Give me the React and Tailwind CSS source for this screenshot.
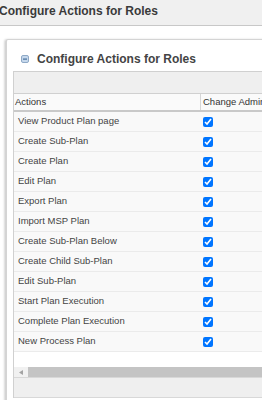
import React from "react";

const actions = [
  "View Product Plan page",
  "Create Sub-Plan",
  "Create Plan",
  "Edit Plan",
  "Export Plan",
  "Import MSP Plan",
  "Create Sub-Plan Below",
  "Create Child Sub-Plan",
  "Edit Sub-Plan",
  "Start Plan Execution",
  "Complete Plan Execution",
  "New Process Plan",
];

const MinusBox = () => (
  <svg width="8" height="8" viewBox="0 0 8 8" className="shrink-0">
    <rect x="0.5" y="0.5" width="7" height="7" rx="1.5" fill="#c6d8ec" stroke="#8fa9c6" />
    <rect x="2" y="3.5" width="4" height="1.2" fill="#456f9b" />
  </svg>
);

const App = () => {
  return (
    <div
      className="w-[262px] h-[400px] overflow-hidden bg-white text-[#333]"
      style={{ fontFamily: '"Liberation Sans", Arial, sans-serif' }}
    >
      {/* page header */}
      <div className="h-[26px] bg-[#f0f0f0] border-b border-[#c8c8c8] flex items-center -ml-[1px] pb-[3px]">
        <h1 className="text-[12px] font-bold text-[#3a3a3a] leading-none">
          Configure Actions for Roles
        </h1>
      </div>

      {/* panel */}
      <div className="ml-[5px] mt-[13px] w-[300px] h-[400px] border-l-2 border-t border-[#d4d4d4] rounded-tl-[3px] shadow-[-1px_0_2px_rgba(0,0,0,0.15)] pl-[6px] pt-[9px]">
        <div className="flex items-center gap-[8px] pl-[8px] h-[20px]">
          <MinusBox />
          <span className="text-[12px] font-bold text-[#444]">
            Configure Actions for Roles
          </span>
        </div>

        <div className="border-l border-t border-[#d0d0d0] mt-[2px]">
          {/* toolbar */}
          <div className="h-[22px] bg-[#efefef] border-b border-[#d0d0d0]" />
          {/* header row */}
          <div className="flex h-[18px] border-b-2 border-[#c9c9c9] text-[9.5px] text-[#333] bg-[#fafafa]">
            <div className="w-[187px] border-r border-[#d6d6d6] pl-[1px] flex items-center">
              Actions
            </div>
            <div className="pl-[2px] flex items-center whitespace-nowrap">
              Change Admin
            </div>
          </div>
          {/* rows */}
          {actions.map((a) => (
            <div
              key={a}
              className="flex h-[20px] border-b border-[#ebebeb] text-[9.5px] text-[#444] bg-[#f9f9f9]"
            >
              <div className="w-[187px] pl-[4px] flex items-center whitespace-nowrap">
                {a}
              </div>
              <div className="pl-[2px] flex items-center">
                <input
                  type="checkbox"
                  checked
                  readOnly
                  className="w-[10px] h-[10px] m-0 accent-[#0075ff]"
                />
              </div>
            </div>
          ))}
          <div className="h-[15px] bg-white" />
          {/* horizontal scrollbar */}
          <div className="flex h-[10px] bg-[#f1f1f1]">
            <div className="w-[14px] flex items-center justify-center">
              <svg width="4" height="5" viewBox="0 0 4 5">
                <path d="M4 0 L0 2.5 L4 5 Z" fill="#a3a3a3" />
              </svg>
            </div>
            <div className="flex-1 bg-[#c4c4c4]" />
          </div>
          {/* footer */}
          <div className="h-[21px] bg-[#efefef] border-t border-[#d8d8d8] border-b" />
        </div>
      </div>
    </div>
  );
};

export default App;
